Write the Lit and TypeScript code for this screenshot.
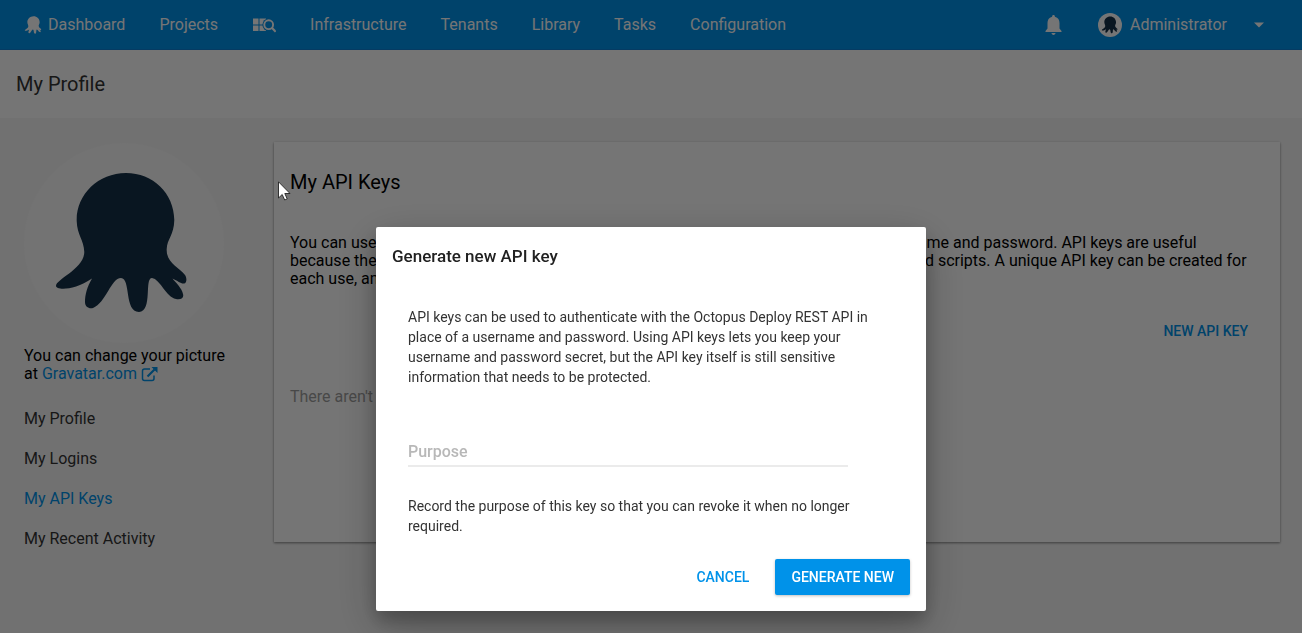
import { LitElement, html, css, svg } from "lit";
import { customElement } from "lit/decorators.js";

const octopus = svg`<path d="M102 30C74 30 52 52 52.700 78C53 92 60 97 60.300 109C60 126 32 136 32 143C32 147 50 148 68 135.500C63 144 61 152 61 159C61 164 65 166 69 165C82 160 87 135 97 135C107 135 100 169 115 169C129 168 120 135 128 135C136 136 142 154 152 156C158 157 160 154 159 151C158 145 151 139 148.500 135.500C154 138 157 141 160 140.500C163 140 163 135 161 132C155 124 142 120 142.700 106C143 96 150 92 150.300 77C150 50 129 30 102 30Z"/>`;

@customElement("app-root")
export class AppRoot extends LitElement {
  static styles = css`
    :host {
      display: block;
      min-height: 100vh;
      background: #f7f7f7;
      color: #000;
      font: 400 16px/18px Roboto, sans-serif;
    }
    * { box-sizing: border-box; }
    h1, h2, p, ul { margin: 0; padding: 0; }
    ul { list-style: none; }
    a { color: inherit; text-decoration: none; }
    svg { display: block; flex: none; }
    button { border: 0; background: none; padding: 0; margin: 0; font: inherit; color: inherit; cursor: pointer; }

    .topbar {
      display: flex;
      justify-content: space-between;
      align-items: center;
      height: 50px;
      padding: 0 31px 0 24px;
      background: #0092e9;
      border-bottom: 1px solid #0d80d8;
      color: #fff;
    }
    .links { display: flex; align-items: center; gap: 34px; }
    .link, .user { display: flex; align-items: center; }
    .link { gap: 6px; }
    .account { display: flex; align-items: center; gap: 36px; }
    .user { gap: 8px; }
    .caret { margin-left: 12px; }
    .white { fill: #fff; }

    .titlebar { background: #fff; height: 68px; padding: 0 16px; display: flex; align-items: center; }
    .heading { font-size: 20px; line-height: 24px; font-weight: 400; }
    .titlebar .heading { color: #333; }

    .page { display: flex; gap: 32px; padding: 24px 22px 24px 24px; align-items: flex-start; }
    .side { flex: 0 0 218px; padding-top: 1px; }
    .avatar { width: 200px; height: 200px; margin-bottom: 4px; }
    .blue { color: #0092e9; }
    .gravatar { display: inline-flex; gap: 4px; align-items: center; }
    .menu { padding-top: 16px; }
    .menu a { display: block; line-height: 40px; color: #333; }
    .menu a.blue { color: #0092e9; }

    .card {
      flex: 1;
      min-width: 0;
      min-height: 400px;
      padding: 28px 16px;
      background: #fff;
      box-shadow: 0 1px 3px rgba(0, 0, 0, 0.2), 0 1px 2px rgba(0, 0, 0, 0.3);
    }
    .about { margin-top: 40px; }
    .line { display: block; white-space: nowrap; }
    .actions { display: flex; justify-content: flex-end; padding: 33px 16px; }
    .action { font-size: 14px; line-height: 20px; font-weight: 500; color: #0092e9; }
    .empty { color: #9e9e9e; padding-top: 14px; }

    .overlay {
      position: fixed;
      inset: 0;
      display: flex;
      justify-content: center;
      align-items: flex-start;
      padding-top: 227px;
      background: rgba(0, 0, 0, 0.54);
    }
    .dialog {
      width: 550px;
      max-width: 90%;
      background: #fff;
      border-radius: 2px;
      padding: 16px;
      box-shadow: 0 14px 45px rgba(0, 0, 0, 0.25), 0 10px 18px rgba(0, 0, 0, 0.22);
    }
    .dialog-title { font-size: 17px; line-height: 27px; font-weight: 500; color: #212121; }
    .body { padding: 37px 16px 23px; font-size: 14px; line-height: 20px; color: #333; }
    .purpose {
      display: block;
      width: 440px;
      max-width: 100%;
      height: 30px;
      margin: 50px 0 29px;
      padding: 0;
      border: 0;
      border-bottom: 2px solid #ebebeb;
      outline: 0;
      background: none;
      font: 500 16px/24px Roboto, sans-serif;
    }
    .purpose::placeholder { color: #b8b8b8; opacity: 1; }
    .footer { display: flex; justify-content: flex-end; align-items: center; gap: 26px; }
    .primary {
      height: 36px;
      padding: 0 16px;
      border-radius: 2px;
      background: #0092e9;
      color: #fff;
      box-shadow: 0 1px 3px rgba(0, 0, 0, 0.25);
    }
    .cursor { position: absolute; left: 278px; top: 181px; }
    .sr { position: absolute; width: 1px; height: 1px; overflow: hidden; clip-path: inset(50%); }
  `;

  render() {
    return html`
      <header class="topbar">
        <nav class="links">
          <a class="link" href="#"><svg class="white" width="18" height="18" viewBox="30 28 135 143">${octopus}</svg>Dashboard</a>
          <a class="link" href="#">Projects</a>
          <a class="link" href="#" aria-label="Search projects">
            <svg class="white" width="24" height="16" viewBox="0 0 24 16">
              <path d="M1 1.500h5.500v6H1zM7.500 1.500H14v6H7.500zM1 8.500h5.500v5.500H1zM7.500 8.500H14V14H7.500z"/>
              <circle cx="16.700" cy="7.700" r="6.300" fill="#0092e9"/>
              <circle cx="16.700" cy="7.700" r="4.400" fill="none" stroke="#fff" stroke-width="1.900"/>
              <path d="M19.800 10.800l3.900 4" fill="none" stroke="#fff" stroke-width="2.200"/>
            </svg>
          </a>
          <a class="link" href="#">Infrastructure</a>
          <a class="link" href="#">Tenants</a>
          <a class="link" href="#">Library</a>
          <a class="link" href="#">Tasks</a>
          <a class="link" href="#">Configuration</a>
        </nav>
        <div class="account">
          <button aria-label="Notifications">
            <svg class="white" width="17" height="20" viewBox="0 0 17 20">
              <path d="M8.500 0C9.400 0 9.900.6 9.900 1.700C13.200 2.500 14.500 5 14.500 8v5.500L16.500 16v1H.5v-1l2-2.500V8c0-3 1.300-5.500 4.600-6.300C7.100.6 7.600 0 8.500 0zM6.500 18h4c0 1.100-.9 1.900-2 1.900s-2-.8-2-1.900z"/>
            </svg>
          </button>
          <button class="user">
            <svg width="24" height="24" viewBox="0 0 200 200"><circle cx="100" cy="100" r="100" fill="#fff"/><g fill="#153048">${octopus}</g></svg>
            Administrator
            <svg class="caret white" width="24" height="24" viewBox="0 0 24 24"><path d="M7 9.500l5 5 5-5z"/></svg>
          </button>
        </div>
      </header>
      <div class="titlebar"><h1 class="heading">My Profile</h1></div>
      <main class="page">
        <aside class="side">
          <svg class="avatar" viewBox="0 0 200 200"><circle cx="100" cy="100" r="100" fill="#fafafa"/><g fill="#153048">${octopus}</g></svg>
          <p>You can change your picture<br />at <a class="blue gravatar" href="#">Gravatar.com
            <svg width="17" height="15" viewBox="0 0 17 15" fill="none" stroke="currentColor" stroke-width="1.500">
              <path d="M9 2H3.500Q1.500 2 1.500 4v7.500Q1.500 13.500 3.500 13.500H11Q13 13.500 13 11.500V8.500"/>
              <path d="M6.500 9.500L13.500 2.500" stroke-width="2.200"/><path d="M10.500 0H16.500V6z" fill="currentColor" stroke="none"/>
            </svg></a></p>
          <ul class="menu">
            <li><a href="#">My Profile</a></li>
            <li><a href="#">My Logins</a></li>
            <li><a class="blue" href="#">My API Keys</a></li>
            <li><a href="#">My Recent Activity</a></li>
          </ul>
        </aside>
        <section class="card">
          <h2 class="heading">My API Keys</h2>
          <p class="about">
            <span class="line">You can use API keys to authenticate to the Octopus Deploy REST API in place of a username and password. API keys are useful</span>
            <span class="line">because they let you keep your username and password secret in external applications and scripts. A unique API key can be created for</span>
            <span class="line">each use, and revoked when it is no longer needed.</span>
          </p>
          <div class="actions"><button class="action">NEW API KEY</button></div>
          <p class="empty">There aren't any API keys.</p>
        </section>
      </main>

      <div class="overlay">
        <div class="dialog" role="dialog" aria-modal="true" aria-labelledby="title">
          <h2 class="dialog-title" id="title">Generate new API key</h2>
          <div class="body">
            <p>API keys can be used to authenticate with the Octopus Deploy REST API in place of a username and password. Using API keys lets you keep your username and password secret, but the API key itself is still sensitive information that needs to be protected.</p>
            <label class="sr" for="purpose">Purpose</label>
            <input class="purpose" id="purpose" type="text" placeholder="Purpose" />
            <p>Record the purpose of this key so that you can revoke it when no longer required.</p>
          </div>
          <div class="footer">
            <button class="action">CANCEL</button>
            <button class="action primary">GENERATE NEW</button>
          </div>
        </div>
        <svg class="cursor" width="13" height="20" viewBox="0 0 13 20"><path d="M.5.8V17l3.700-3.500L6.700 19l2.500-1.100L6.800 12.500H12z" fill="#fff" stroke="#222" stroke-width=".9"/></svg>
      </div>
    `;
  }
}
